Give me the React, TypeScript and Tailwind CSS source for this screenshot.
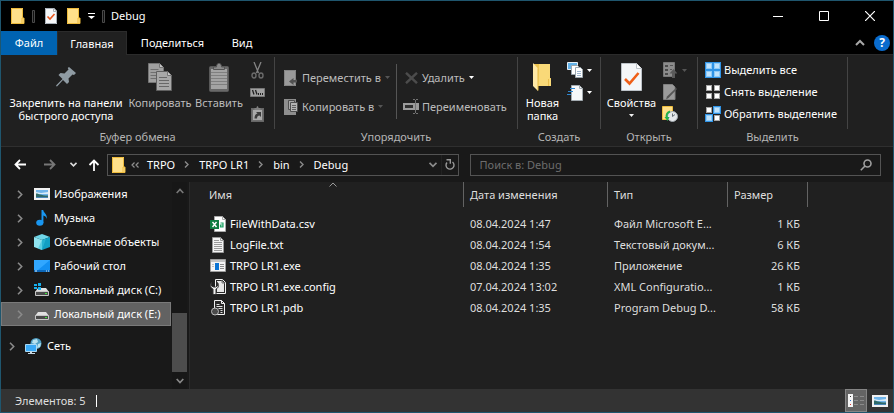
import type { ReactNode } from "react";

function Svg({ w, h, children, className = "" }: { w: number; h: number; children: ReactNode; className?: string }) {
  return (
    <svg width={w} height={h} viewBox={`0 0 ${w} ${h}`} className={`shrink-0 ${className}`} aria-hidden="true">
      {children}
    </svg>
  );
}

const Folder = () => (
  <Svg w={14} h={16}>
    <path d="M0 0h12v10h1v6H0z" fill="#ffe08a" />
    <path d="M.5.5h11v9.5M.5.5v15h12.5v-5.500h-2v5" fill="none" stroke="#eebb3c" />
  </Svg>
);

const Grip = () => (
  <Svg w={3} h={13}>
    <path d="M.5.5h2v12h-2z" fill="#111" stroke="#4a4a4a" />
  </Svg>
);

const CheckDoc = () => (
  <Svg w={12} h={16}>
    <path d="M0 0h9l3 3v13H0z" fill="#f5f7f9" />
    <path d="M.5.5h8.300l2.700 2.700v12.300H.5z M8.500 .5v3h3" fill="none" stroke="#a8b0b8" />
    <path d="M2.500 8.500l2.500 2.500 4.500-5" fill="none" stroke="#e8581f" strokeWidth="1.600" />
  </Svg>
);

const Caret = ({ className = "text-[#f0f0f0]" }: { className?: string }) => (
  <Svg w={5} h={3} className={className}>
    <path d="M0 0h5L2.500 3z" fill="currentColor" />
  </Svg>
);

const Chevron = ({ className = "text-[#8a8a8a]" }: { className?: string }) => (
  <Svg w={6} h={9} className={className}>
    <path d="M1 .8l3.700 3.700L1 8.200" fill="none" stroke="currentColor" strokeWidth="1.600" />
  </Svg>
);

const Crumb = () => (
  <Svg w={6} h={7} className="mx-[9px] text-[#8a8a8a]">
    <path d="M1 .5l3 3-3 3" fill="none" stroke="currentColor" strokeWidth="1.400" />
  </Svg>
);

const Pin = () => (
  <Svg w={20} h={20}>
    <path d="M13 0l7 6-2 2-1.500-.5-4 4 .5 3.500-2 2-4-4-6 6.500-1-.5.5-1L6.500 12l-4-4 2-2 4 .5 4-4-.8-1.500z" fill="#8f9ba3" />
  </Svg>
);

const Copy = () => (
  <Svg w={24} h={28}>
    <path d="M.5.5h11l4 4v15H.5z" fill="#a0a0a0" stroke="#757575" />
    <path d="M11.500.5v4h4" fill="#c4c4c4" stroke="#757575" />
    <path d="M2.500 6.500h8M2.500 9.500h6M2.500 12.500h6M2.500 15.500h6" stroke="#707070" />
    <path d="M8.500 8.500h11l4 4v15h-15z" fill="#a8a8a8" stroke="#606060" />
    <path d="M19.500 8.500v4h4" fill="#c8c8c8" stroke="#757575" />
    <path d="M11 14.500h8M11 17.500h10M11 20.500h10M11 23.500h10" stroke="#686868" />
  </Svg>
);

const Paste = () => (
  <Svg w={20} h={29}>
    <rect x=".5" y="3.500" width="19" height="25" rx="1" fill="#686868" stroke="#595959" />
    <path d="M2 6h16v20H2z" fill="#a4a4a4" />
    <path d="M4.500 6.500V4h3c0-5 5-5 5 0h3v2.500z" fill="#8a8a8a" stroke="#555" />
    <path d="M2 9.500h16M2 12.500h16M2 15.500h16M2 18.500h16M2 21.500h16" stroke="#808080" />
  </Svg>
);

const Cut = () => (
  <Svg w={13} h={17}>
    <path d="M3 0l4.500 11M10 0L5.500 11" stroke="#858585" strokeWidth="1.300" />
    <ellipse cx="3" cy="13.500" rx="2" ry="2.500" fill="none" stroke="#6a6a6a" strokeWidth="1.400" />
    <ellipse cx="10" cy="13.500" rx="2" ry="2.500" fill="none" stroke="#6a6a6a" strokeWidth="1.400" />
  </Svg>
);

const CopyPath = () => (
  <Svg w={15} h={9}>
    <path d="M.5.5h14v8H.5z" fill="#a2a2a2" stroke="#787878" />
    <path d="M2.500 2l1.500 4.500M5.500 2L7 6.500" stroke="#222" strokeWidth="1.300" />
    <path d="M8 5h1v2H8zM10 5h1v2h-1zM12 5h1v2h-1z" fill="#222" />
  </Svg>
);

const PasteShortcut = () => (
  <Svg w={13} h={16}>
    <rect x=".5" y="2.500" width="12" height="13" fill="#707070" stroke="#666" />
    <path d="M2 4h9v10H2z" fill="#aaa" />
    <path d="M3.500 4V2h2c0-2.500 2-2.500 2 0h2v2z" fill="#808080" />
    <path d="M3.500 12.500c0-3 1-4.500 3-5L5 6h5v5L8.500 9.500c-1.500.3-2.500 1-2.500 3z" fill="#3c3c3c" />
  </Svg>
);

const MoveTo = () => (
  <Svg w={14} h={16}>
    <path d="M0 0h12v16H0z" fill="#9a9a9a" />
    <path d="M.5.5h11v15H.5z" fill="none" stroke="#848484" />
    <path d="M13 9.500v3H9.500V15L5 11.500 9.500 8v2h1.500z" fill="#505050" />
  </Svg>
);

const CopyTo = () => (
  <Svg w={14} h={16}>
    <path d="M0 0h12v16H0z" fill="#8e8e8e" />
    <path d="M4.500 1.500h6v9h-6z" fill="#aaa" stroke="#505050" />
    <path d="M6.500 3.500h7v9h-7z" fill="#b4b4b4" stroke="#505050" />
    <path d="M8 6.500h4M8 8.500h4M8 10.500h4" stroke="#606060" />
  </Svg>
);

const Delete = () => (
  <Svg w={13} h={12}>
    <path d="M1 .8l11 10.400M12 .8L1 11.200" stroke="#4c4c4c" strokeWidth="2.400" />
  </Svg>
);

const Rename = () => (
  <Svg w={16} h={15}>
    <path d="M0 4h16v7H0z" fill="#9c9c9c" />
    <path d="M2 6h8v3H2z" fill="#303030" />
    <path d="M12.500 1v13M10 .5h2M13 .5h2M10 14.500h2M13 14.500h2" stroke="#737373" />
  </Svg>
);

const NewFolder = () => (
  <Svg w={19} h={28}>
    <path d="M1 1h16v14h1v8H1z" fill="#eec34e" />
    <path d="M6 1h11v14l1 1v7H5z" fill="#f9d978" />
    <path d="M0 0l5 5.500V28l-5-5z" fill="#ffe9a6" />
    <path d="M5 5.500V27.500" stroke="#e5b942" />
    <path d="M15.500 23v-7" stroke="#e9be4c" />
  </Svg>
);

const NewItem = () => (
  <Svg w={16} h={16}>
    <path d="M.5.5h10v7H.5z" fill="#62b2e8" stroke="#e6eef4" />
    <path d="M4.500 3.500h6l1 1v8h-7z" fill="#fff" stroke="#9aa6ae" />
    <path d="M8.500 5.500h5l2 2v8h-7z" fill="#fff" stroke="#9aa6ae" />
    <path d="M10 9.500h4M10 11.500h4M10 13.500h4" stroke="#9db6cf" />
  </Svg>
);

const EasyAccess = () => (
  <Svg w={16} h={17}>
    <path d="M4.500 1.500h8l3 3v12h-11z" fill="#f7f9fa" stroke="#a3abb0" />
    <path d="M12.500 1.500v3h3" fill="none" stroke="#a3abb0" />
    <path d="M3 4.500h5M1 7.500h5M0 10.500h4" stroke="#2f86cf" strokeWidth="1.200" />
  </Svg>
);

const Properties = () => (
  <Svg w={21} h={28}>
    <path d="M.5.5h15l5 5v22H.5z" fill="#f4f6f8" stroke="#bcc2c8" />
    <path d="M15.500.5v5h5" fill="#fff" stroke="#bcc2c8" />
    <path d="M4 16l4.500 4.500L17.500 10" fill="none" stroke="#ef5f18" strokeWidth="2.600" />
  </Svg>
);

const OpenIcon = () => (
  <Svg w={14} h={16}>
    <path d="M.5.5h11v14H.5z" fill="#8c8c8c" stroke="#777" />
    <path d="M2 3h3v2H2zM2 7h3v2H2zM2 11h3v2H2z" fill="#4a4a4a" />
    <path d="M7 3.500h3M7 7.500h2" stroke="#555" />
    <path d="M10.500 7l4 4.500H12V16H9v-4.500H6.500z" fill="#5a5a5a" />
  </Svg>
);

const Edit = () => (
  <Svg w={14} h={16}>
    <path d="M.5.500h9l2.500 2.500v12.500H.5z" fill="#9a9a9a" stroke="#808080" />
    <path d="M13 4l1 1-8.500 9-2.500 1.500 1-3z" fill="#555" />
  </Svg>
);

const History = () => (
  <Svg w={16} h={16}>
    <path d="M.5.5h10v13H.5z" fill="#ffe08a" stroke="#efbd3e" />
    <circle cx="10.500" cy="10.500" r="5" fill="#e6e9ec" stroke="#a5acb2" />
    <path d="M10.500 7.500v3l2.500-2" fill="none" stroke="#68727a" />
    <path d="M8 5.500C5 6.500 4 9 5 12" fill="none" stroke="#22b14c" strokeWidth="2" />
    <path d="M2.500 11l5 0-2 4z" fill="#22b14c" />
  </Svg>
);

function SelectIcon({ on, frame = false }: { on: boolean[]; frame?: boolean }) {
  return (
    <Svg w={16} h={16}>
      {frame && <path d="M0 0h16v16H0z" fill="#2f93e6" />}
      {on.map((lit, i) => {
        const x = (i % 2) * 8;
        const y = i < 2 ? 0 : 8;
        return lit ? (
          <g key={i}>
            <rect x={x} y={y} width="8" height="8" fill="#2f93e6" />
            <rect x={x + 1.5} y={y + 1.5} width="5" height="5" fill="#bfe2fc" stroke="#8fcaf6" />
          </g>
        ) : (
          <rect key={i} x={x + 1.5} y={y + 1.5} width="5" height="5" fill="#fff" stroke="#a5a5a5" />
        );
      })}
    </Svg>
  );
}

function Group({ label, width, children }: { label: string; width: string; children: ReactNode }) {
  return (
    <>
      <section className={`flex shrink-0 flex-col ${width}`} aria-label={label}>
        <div className="flex h-[74px]">{children}</div>
        <div className="text-center leading-4 text-[#b4b4b4]">{label}</div>
      </section>
      <div className="mt-[2px] h-[72px] w-px shrink-0 bg-[#444]" />
    </>
  );
}

function Big({ icon, lines, width, dim = false, caret = false }: { icon: ReactNode; lines: string[]; width: string; dim?: boolean; caret?: boolean }) {
  return (
    <button className={`flex shrink-0 flex-col items-center pt-2 leading-[13px] whitespace-nowrap ${width} ${dim ? "text-[#bcbcbc]" : "text-white"}`}>
      <span className="mb-[5px] flex h-7 items-center">{icon}</span>
      {lines.map((l) => (
        <span key={l}>{l}</span>
      ))}
      {caret && (
        <span className="flex h-[13px] items-center">
          <Caret />
        </span>
      )}
    </button>
  );
}

function Small({ icon, label, caret, height = "h-[22px]", name }: { icon: ReactNode; label?: string; caret?: string; height?: string; name?: string }) {
  return (
    <button aria-label={name} className={`flex items-center whitespace-nowrap ${height}`}>
      <span className="flex w-4 justify-center">{icon}</span>
      {label && <span className="ml-[3px]">{label}</span>}
      {caret && <Caret className={`ml-1 ${caret}`} />}
    </button>
  );
}

const PictureIcon = () => (
  <Svg w={16} h={12}>
    <path d="M0 0h16v12H0z" fill="#f1f1f1" />
    <path d="M2 2h12v8H2z" fill="#71b5ea" />
    <path d="M2 4l5 1 7-1v2H2z" fill="#d9ecf8" />
    <path d="M2 5.500c3 0 4 2 12 2V10H2z" fill="#2f6a68" />
    <path d="M2 9h12v1H2z" fill="#4a86b8" />
  </Svg>
);

const MusicIcon = () => (
  <Svg w={12} h={16}>
    <ellipse cx="3.800" cy="12.700" rx="3.600" ry="3" fill="#1996f0" />
    <path d="M5.500 0h1.700c.3 3 4.300 4 3.600 9-.5-2.500-2-3-3.400-3.500V13H5.500z" fill="#1996f0" />
  </Svg>
);

const CubeIcon = () => (
  <Svg w={16} h={16}>
    <path d="M0 3l8-3 8 3-8 3z" fill="#6fd6e8" />
    <path d="M0 3l8 3v10l-8-3z" fill="#8fe3ef" />
    <path d="M16 3L8 6v10l8-3z" fill="#119fc4" />
    <path d="M8 6l4-1.500L8 16l-4-1.500z" fill="#36c0da" opacity=".6" />
  </Svg>
);

const DesktopIcon = () => (
  <Svg w={16} h={12}>
    <path d="M0 0h16v12H0z" fill="#1490f2" />
    <path d="M0 0h16L4 10H0z" fill="#31a7ff" />
    <path d="M0 10h16v2H0z" fill="#0c67b8" />
    <path d="M1 11h2M12 11h1M14 11h1" stroke="#d8efff" />
  </Svg>
);

const DiskIcon = ({ system = false }: { system?: boolean }) => (
  <Svg w={16} h={14}>
    <path d="M4 5h8l3 4H1z" fill="#e0e0e0" />
    <path d="M1.500 8.500h13v4h-13z" fill="#4a4a4a" stroke="#c5c5c5" />
    <path d="M11 10h2v1h-2z" fill="#3ee83a" />
    {system && <path d="M0 1h3v2H0zM4 0h3v3H4zM0 4h3v2H0zM4 4h3v3H4z" fill="#18b0ee" />}
  </Svg>
);

const NetworkIcon = () => (
  <Svg w={17} h={16}>
    <circle cx="11" cy="5.500" r="5.500" fill="#4f9fc4" />
    <path d="M8 2l4-1 1 3-3 2-3-1zM13 6l3-1-1 4-3 1z" fill="#b9e2ee" />
    <path d="M.5 6.500h11v7H.5z" fill="#39a9f6" stroke="#a9d9f5" />
    <path d="M5 13h2v2h3v1H3v-1h2z" fill="#c8d9e4" />
  </Svg>
);

const CsvIcon = () => (
  <Svg w={16} h={16}>
    <path d="M4.500.5h8l3 3v12h-11z" fill="#fff" stroke="#aaa" />
    <path d="M12.500.5v3h3" fill="none" stroke="#aaa" />
    <path d="M0 4h9v9H0z" fill="#107c41" />
    <path d="M2.500 6l4 5M6.500 6l-4 5" stroke="#fff" strokeWidth="1.400" />
    <path d="M10.500 7h2.500v3.800h-2.500V9H13" fill="none" stroke="#21a366" strokeWidth="1.200" />
  </Svg>
);

const TxtIcon = () => (
  <Svg w={12} h={16}>
    <path d="M.5.5h8l3 3v12H.5z" fill="#f4f4f4" stroke="#9a9a9a" />
    <path d="M8.500.5v3h3" fill="none" stroke="#9a9a9a" />
    <path d="M2 3.500h5M2 5.500h8M2 7.500h8M2 9.500h8M2 11.500h8M2 13.500h8" stroke="#9a9a9a" />
  </Svg>
);

const ExeIcon = () => (
  <Svg w={16} h={13}>
    <path d="M.5.5h15v12H.5z" fill="#f5f5f5" stroke="#9d9d9d" />
    <path d="M1 1h14v2H1z" fill="#c4c4c4" />
    <path d="M5 4h4v7H5z" fill="#0b74d4" />
    <path d="M10 5.500h4M10 7.500h4M10 9.500h4" stroke="#8b8b8b" />
    <path d="M2 5.500h2M2 7.500h2" stroke="#c0c0c0" />
  </Svg>
);

const ConfigIcon = () => (
  <Svg w={16} h={16}>
    <path d="M5.500.5h7l3 3v11h-10z" fill="#2a2a2a" stroke="#f1f1f1" />
    <path d="M7 2h5l2 2v9H7z" fill="#e6e6e6" />
    <path d="M12 1v3h3" fill="none" stroke="#777" />
    <path d="M1.500 3.500C-.5 6 .5 9 3 10v5.500h3V10c2.500-1 3.500-4 1.500-6.500V7l-2 1h-2l-2-1z" fill="#f1f1f1" stroke="#333" />
  </Svg>
);

const PdbIcon = () => (
  <Svg w={14} h={16}>
    <path d="M3.500.5h7l3 3v11h-10z" fill="#2a2a2a" stroke="#f1f1f1" />
    <path d="M10.500.5v3h3" fill="none" stroke="#f1f1f1" />
    <path d="M5.500 4.500h3M5.500 6.500h6M7.500 8.500h4M9.500 10.500h2M9.500 12.500h2" stroke="#e1e1e1" />
    <circle cx="4" cy="11.500" r="3.500" fill="#4a4a4a" stroke="#bbb" />
  </Svg>
);

const places = [
  { name: "Изображения", icon: <PictureIcon /> },
  { name: "Музыка", icon: <MusicIcon /> },
  { name: "Объемные объекты", icon: <CubeIcon /> },
  { name: "Рабочий стол", icon: <DesktopIcon /> },
  { name: "Локальный диск (C:)", icon: <DiskIcon system /> },
  { name: "Локальный диск (E:)", icon: <DiskIcon />, active: true },
];

const files = [
  { name: "FileWithData.csv", icon: <CsvIcon />, date: "08.04.2024 1:47", type: "Файл Microsoft E...", size: "1 КБ" },
  { name: "LogFile.txt", icon: <TxtIcon />, date: "08.04.2024 1:54", type: "Текстовый докум...", size: "6 КБ" },
  { name: "TRPO LR1.exe", icon: <ExeIcon />, date: "08.04.2024 1:35", type: "Приложение", size: "26 КБ" },
  { name: "TRPO LR1.exe.config", icon: <ConfigIcon />, date: "07.04.2024 13:02", type: "XML Configuratio...", size: "1 КБ" },
  { name: "TRPO LR1.pdb", icon: <PdbIcon />, date: "08.04.2024 1:35", type: "Program Debug D...", size: "58 КБ" },
];

function TitleBar() {
  return (
    <header className="flex h-[30px] shrink-0 items-center bg-black pl-[10px]">
      <Folder />
      <span className="ml-[7px]"><Grip /></span>
      <button aria-label="Свойства" className="ml-[10px]"><CheckDoc /></button>
      <button aria-label="Новая папка" className="ml-[10px]"><Folder /></button>
      <button aria-label="Настройка панели" className="ml-[7px]">
        <Svg w={7} h={6}>
          <path d="M0 .5h7" stroke="#fff" />
          <path d="M0 3h7L3.500 6z" fill="#fff" />
        </Svg>
      </button>
      <span className="ml-[7px]"><Grip /></span>
      <h1 className="ml-[6px] flex-1 text-white">Debug</h1>
      <button aria-label="Свернуть" className="flex h-full w-[46px] items-center justify-center">
        <Svg w={10} h={10}><path d="M0 5.500h10" stroke="#fff" /></Svg>
      </button>
      <button aria-label="Развернуть" className="flex h-full w-[46px] items-center justify-center">
        <Svg w={10} h={10}><path d="M.5.5h9v9h-9z" fill="none" stroke="#fff" /></Svg>
      </button>
      <button aria-label="Закрыть" className="flex h-full w-[46px] items-center justify-center">
        <Svg w={10} h={10}><path d="M0 0l10 10M10 0L0 10" stroke="#fff" strokeWidth="1.200" /></Svg>
      </button>
    </header>
  );
}

function Tabs() {
  return (
    <nav className="flex h-6 shrink-0 bg-black text-white">
      <button className="w-14 bg-[#0063b1]">Файл</button>
      <button className="w-[70px] border-x border-t border-[#2b2b2b] bg-[#202020]">Главная</button>
      <button className="w-[91px] border-b border-[#2b2b2b]">Поделиться</button>
      <button className="w-12 border-b border-[#2b2b2b]">Вид</button>
      <div className="flex flex-1 items-center justify-end gap-[9px] border-b border-[#2b2b2b] pr-[3px]">
        <button aria-label="Свернуть ленту">
          <Svg w={10} h={7}><path d="M1 6l4-4 4 4" fill="none" stroke="#a8a8a8" strokeWidth="2" /></Svg>
        </button>
        <button aria-label="Справка" className="flex size-4 items-center justify-center rounded-full bg-[#0a6cce] text-[12px] leading-4 font-bold">?</button>
      </div>
    </nav>
  );
}

function Ribbon() {
  return (
    <div className="flex h-[92px] shrink-0 overflow-hidden border-b border-[#2f2f2f] bg-[#202020] text-white">
      <Group label="Буфер обмена" width="w-[273px]">
        <Big icon={<Pin />} lines={["Закрепить на панели", "быстрого доступа"]} width="w-[130px]" />
        <Big icon={<Copy />} lines={["Копировать"]} width="w-[58px]" dim />
        <Big icon={<Paste />} lines={["Вставить"]} width="w-[60px]" dim />
        <div className="flex flex-col pt-1">
          <Small icon={<Cut />} name="Вырезать" />
          <Small icon={<CopyPath />} name="Скопировать путь" />
          <Small icon={<PasteShortcut />} name="Вставить ярлык" />
        </div>
      </Group>
      <Group label="Упорядочить" width="w-[242px]">
        <div className="flex w-[121px] flex-col pt-2 pl-2 text-[#bcbcbc]">
          <Small icon={<MoveTo />} label="Переместить в" caret="text-[#555]" height="h-[29px]" />
          <Small icon={<CopyTo />} label="Копировать в" caret="text-[#555]" height="h-[29px]" />
        </div>
        <div className="mt-[9px] h-[55px] w-px bg-[#555]" />
        <div className="flex flex-col pt-2 pl-[6px] text-[#bcbcbc]">
          <Small icon={<Delete />} label="Удалить" caret="text-white" height="h-[29px]" />
          <Small icon={<Rename />} label="Переименовать" height="h-[29px]" />
        </div>
      </Group>
      <Group label="Создать" width="w-[82px]">
        <Big icon={<NewFolder />} lines={["Новая", "папка"]} width="w-[49px]" />
        <div className="flex flex-col pt-1">
          <Small icon={<NewItem />} caret="text-white" name="Создать элемент" />
          <Small icon={<EasyAccess />} caret="text-white" name="Простой доступ" />
        </div>
      </Group>
      <Group label="Открыть" width="w-[96px]">
        <Big icon={<Properties />} lines={["Свойства"]} width="w-[61px]" caret />
        <div className="flex flex-col pt-1">
          <Small icon={<OpenIcon />} caret="text-[#555]" name="Открыть" />
          <Small icon={<Edit />} name="Изменить" />
          <Small icon={<History />} name="Журнал" />
        </div>
      </Group>
      <Group label="Выделить" width="w-[149px]">
        <div className="flex flex-col pt-1 pl-[7px]">
          <Small icon={<SelectIcon on={[true, true, true, true]} frame />} label="Выделить все" />
          <Small icon={<SelectIcon on={[false, false, false, false]} />} label="Снять выделение" />
          <Small icon={<SelectIcon on={[false, true, true, false]} />} label="Обратить выделение" />
        </div>
      </Group>
    </div>
  );
}

function AddressBar() {
  return (
    <div className="flex h-[35px] shrink-0 items-center pr-3 pl-[13px]">
      <button aria-label="Назад">
        <Svg w={12} h={11}><path d="M12 5.500H1.500M6 1L1.500 5.500 6 10" fill="none" stroke="#fff" strokeWidth="1.800" /></Svg>
      </button>
      <button aria-label="Вперед" className="ml-[18px]">
        <Svg w={12} h={11}><path d="M0 5.500h10.500M6 1l4.500 4.500L6 10" fill="none" stroke="#777" strokeWidth="1.800" /></Svg>
      </button>
      <button aria-label="Последние расположения" className="ml-[14px]">
        <Svg w={7} h={5}><path d="M.5.800l3 3 3-3" fill="none" stroke="#ddd" strokeWidth="1.600" /></Svg>
      </button>
      <button aria-label="Вверх" className="ml-[11px]">
        <Svg w={12} h={12}><path d="M6 12V1.500M1.500 6L6 1.500 10.500 6" fill="none" stroke="#fff" strokeWidth="1.800" /></Svg>
      </button>
      <div className="ml-[7px] grid flex-1 grid-cols-[352fr_412fr] gap-[11px]">
        <div className="flex h-[22px] items-center border border-[#535353] pl-1 text-white">
          <Folder />
          <Svg w={8} h={6} className="ml-[5px]"><path d="M3.500.5L1 3l2.500 2.500M7.500.5L5 3l2.500 2.500" fill="none" stroke="#909090" strokeWidth="1.200" /></Svg>
          <button className="ml-2">TRPO</button>
          <Crumb />
          <button>TRPO LR1</button>
          <Crumb />
          <button>bin</button>
          <Crumb />
          <button>Debug</button>
          <button aria-label="Предыдущие расположения" className="ml-auto flex h-full w-4 items-center justify-center">
            <Svg w={8} h={6}><path d="M.5.800L4 4.300 7.500.800" fill="none" stroke="#8c8c8c" strokeWidth="1.800" /></Svg>
          </button>
          <button aria-label="Обновить" className="flex h-full w-[17px] items-center justify-center border-l border-[#222]">
            <Svg w={10} h={11}>
              <path d="M7.500 3A4 4 0 1 1 2 3.500" fill="none" stroke="#999" strokeWidth="1.400" />
              <path d="M1.500.700h3.800v4" fill="none" stroke="#999" strokeWidth="1.400" />
            </Svg>
          </button>
        </div>
        <label className="flex h-[22px] items-center border border-[#535353] pr-2 pl-[9px]">
          <input aria-label="Поиск" placeholder="Поиск в: Debug" className="min-w-0 flex-1 bg-transparent outline-none placeholder:text-[#6d6d6d]" />
          <Svg w={12} h={12}>
            <circle cx="7.500" cy="4.500" r="3.500" fill="none" stroke="#a0a0a0" strokeWidth="1.600" />
            <path d="M5 7L.8 11.200" stroke="#a0a0a0" strokeWidth="1.600" />
          </Svg>
        </label>
      </div>
    </div>
  );
}

function Sidebar() {
  return (
    <aside className="flex w-[189px] shrink-0 border-r border-[#2b2b2b] text-white">
      <ul className="w-[170px]">
        {places.map((p) => (
          <li key={p.name}>
            <button className={`flex h-6 w-full items-center border pl-[15px] text-left whitespace-nowrap ${p.active ? "border-[#7a7a7a] bg-[#626262]" : "border-transparent"}`}>
              <Chevron />
              <span className="ml-[9px] flex w-5 justify-center">{p.icon}</span>
              <span className="ml-[2px]">{p.name}</span>
            </button>
          </li>
        ))}
        <li className="mt-2">
          <button className="flex h-6 w-full items-center pl-2">
            <Chevron />
            <span className="ml-[10px]"><NetworkIcon /></span>
            <span className="ml-[5px]">Сеть</span>
          </button>
        </li>
      </ul>
      <div className="ml-px flex w-[15px] flex-col items-center bg-[#171717]">
        <Svg w={8} h={17} className="mb-auto"><path d="M.7 11L4 7.500 7.300 11" fill="none" stroke="#777" strokeWidth="1.700" /></Svg>
        <div className="h-[59px] w-full bg-[#4d4d4d]" />
        <Svg w={8} h={17}><path d="M.7 7L4 10.500 7.300 7" fill="none" stroke="#888" strokeWidth="1.700" /></Svg>
      </div>
    </aside>
  );
}

function FileTable() {
  return (
    <main className="min-w-0 flex-1 overflow-hidden bg-[#202020]">
      <table className="w-[618px] table-fixed border-separate border-spacing-0 text-[#dedede]">
        <colgroup>
          <col className="w-[274px]" />
          <col className="w-36" />
          <col className="w-[120px]" />
          <col className="w-20" />
        </colgroup>
        <thead>
          <tr className="h-[25px] text-left">
            <th className="relative border-r border-[#636363] p-0 pl-[19px] font-normal">
              Имя
              <Svg w={8} h={5} className="absolute top-0 left-[139px]"><path d="M.5 4.500L4 1l3.500 3.500" fill="none" stroke="#999" /></Svg>
            </th>
            <th className="border-r border-[#636363] p-0 pl-[6px] font-normal">Дата изменения</th>
            <th className="border-r border-[#636363] p-0 pl-[6px] font-normal">Тип</th>
            <th className="border-r border-[#636363] p-0 pl-[6px] font-normal">Размер</th>
          </tr>
        </thead>
        <tbody>
          <tr className="h-[6px]"><td colSpan={4} className="p-0" /></tr>
          {files.map((f) => (
            <tr key={f.name} className="h-[21px]">
              <td className="p-0 pl-[19px]">
                <div className="flex items-center text-white">
                  <span className="flex w-[18px] justify-center">{f.icon}</span>
                  <span className="ml-[3px]">{f.name}</span>
                </div>
              </td>
              <td className="p-0 pl-[6px]">{f.date}</td>
              <td className="p-0 pl-[6px] whitespace-nowrap">{f.type}</td>
              <td className="p-0 pr-2 text-right">{f.size}</td>
            </tr>
          ))}
        </tbody>
      </table>
    </main>
  );
}

export default function App() {
  return (
    <div className="flex h-screen flex-col overflow-hidden border border-[#1f566e] bg-[#191919] font-['Noto_Sans','Segoe_UI',sans-serif] text-[11px] leading-4">
      <TitleBar />
      <Tabs />
      <Ribbon />
      <AddressBar />
      <div className="flex min-h-0 flex-1">
        <Sidebar />
        <FileTable />
      </div>
      <footer className="flex h-[23px] shrink-0 items-center bg-[#333] pl-[14px] text-[#dedede]">
        <span>Элементов: 5</span>
        <span className="ml-[10px] h-3 w-px bg-white" />
        <button aria-label="Таблица" className="ml-auto flex h-full w-[22px] items-center justify-center border border-[#858585] bg-[#646464]">
          <Svg w={16} h={13}>
            <path d="M0 0h5v13H0z" fill="#f4f4f4" />
            <path d="M2 2h1v1H2z" fill="#333" />
            <path d="M2 6h1v1H2z" fill="#2a6fd0" />
            <path d="M2 10h1v1H2z" fill="#d33" />
            <path d="M6 2.500h4M12 2.500h4M6 6.500h4M12 6.500h4M6 10.500h4M12 10.500h4" stroke="#8b8b8b" />
          </Svg>
        </button>
        <button aria-label="Крупные значки" className="flex h-full w-[26px] items-center justify-center">
          <PictureIcon />
        </button>
      </footer>
    </div>
  );
}
